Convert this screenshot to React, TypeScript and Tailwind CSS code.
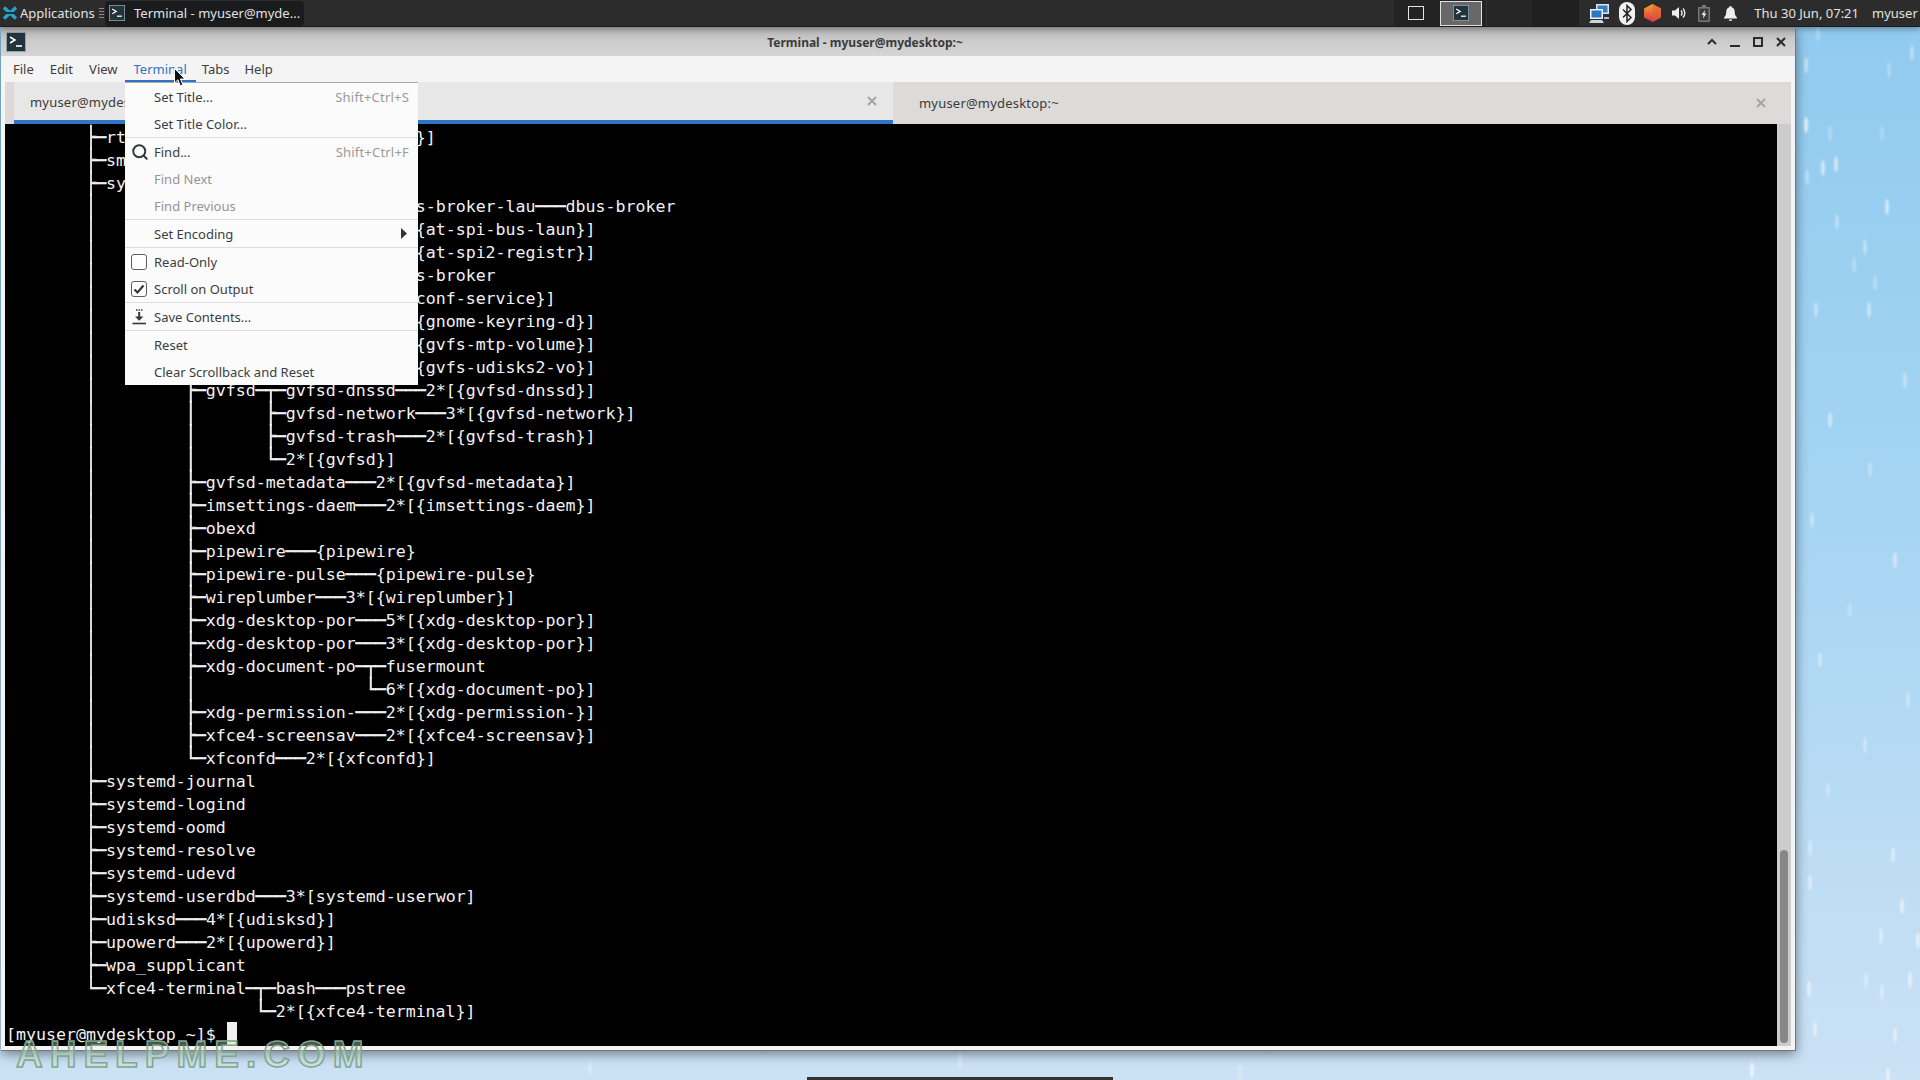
import { Search } from "lucide-react";

const L2 = "        │         ";
const L3 = L2 + "│       ";
const L4 = L2 + "│                 ";

const rows = [
  "        ├─rtkit-daemon───2*[{rtkit-daemon}]",
  "        ├─smartd",
  "        ├─systemd─┬─(sd-pam)",
  L2 + "├─at-spi-bus-laun─┬─dbus-broker-lau───dbus-broker",
  L4 + "└─3*[{at-spi-bus-laun}]",
  L2 + "├─at-spi2-registr───2*[{at-spi2-registr}]",
  L2 + "├─dbus-broker-lau───dbus-broker",
  L2 + "├─dconf-service───2*[{dconf-service}]",
  L2 + "├─gnome-keyring-d───3*[{gnome-keyring-d}]",
  L2 + "├─gvfs-mtp-volume───2*[{gvfs-mtp-volume}]",
  L2 + "├─gvfs-udisks2-vo───2*[{gvfs-udisks2-vo}]",
  L2 + "├─gvfsd─┬─gvfsd-dnssd───2*[{gvfsd-dnssd}]",
  L3 + "├─gvfsd-network───3*[{gvfsd-network}]",
  L3 + "├─gvfsd-trash───2*[{gvfsd-trash}]",
  L3 + "└─2*[{gvfsd}]",
  L2 + "├─gvfsd-metadata───2*[{gvfsd-metadata}]",
  L2 + "├─imsettings-daem───2*[{imsettings-daem}]",
  L2 + "├─obexd",
  L2 + "├─pipewire───{pipewire}",
  L2 + "├─pipewire-pulse───{pipewire-pulse}",
  L2 + "├─wireplumber───3*[{wireplumber}]",
  L2 + "├─xdg-desktop-por───5*[{xdg-desktop-por}]",
  L2 + "├─xdg-desktop-por───3*[{xdg-desktop-por}]",
  L2 + "├─xdg-document-po─┬─fusermount",
  L4 + "└─6*[{xdg-document-po}]",
  L2 + "├─xdg-permission-───2*[{xdg-permission-}]",
  L2 + "├─xfce4-screensav───2*[{xfce4-screensav}]",
  L2 + "└─xfconfd───2*[{xfconfd}]",
  "        ├─systemd-journal",
  "        ├─systemd-logind",
  "        ├─systemd-oomd",
  "        ├─systemd-resolve",
  "        ├─systemd-udevd",
  "        ├─systemd-userdbd───3*[systemd-userwor]",
  "        ├─udisksd───4*[{udisksd}]",
  "        ├─upowerd───2*[{upowerd}]",
  "        ├─wpa_supplicant",
  "        └─xfce4-terminal─┬─bash───pstree",
  "                         └─2*[{xfce4-terminal}]",
];

// raindrops on the wallpaper: x, y, opacity
const drops = [
  [1806, 65, 0.5], [1806, 125, 0.8], [1823, 168, 0.6], [1836, 164, 0.6], [1807, 177, 0.4],
  [1887, 207, 0.6], [1837, 222, 0.4], [1865, 247, 0.4], [1854, 265, 0.3], [1875, 283, 0.3],
  [1869, 310, 0.5], [1816, 310, 0.4], [1912, 53, 0.4], [1818, 33, 0.3], [1889, 70, 0.3],
  [1830, 133, 0.3], [1882, 133, 0.25], [1905, 380, 0.4], [1830, 420, 0.5], [1870, 470, 0.35],
  [1812, 520, 0.4], [1895, 560, 0.5], [1850, 610, 0.3], [1820, 660, 0.45], [1908, 700, 0.35],
  [1865, 745, 0.4], [1828, 790, 0.3], [1893, 855, 0.5], [1810, 848, 0.4], [1810, 883, 0.5],
  [1902, 906, 0.6], [1881, 936, 0.5], [1918, 940, 0.6], [1910, 980, 0.6], [1866, 980, 0.4],
  [1809, 989, 0.6], [1882, 992, 0.4], [1815, 1029, 0.5], [1895, 1035, 0.5], [1752, 1070, 0.7],
  [1888, 1075, 0.6], [590, 1068, 0.3], [960, 1060, 0.4], [1240, 1072, 0.3],
];

function Row({ text }: { text: string }) {
  const parts = text.split(/([─│├└┬])/);
  return (
    <div className="h-[23px] leading-[23px] whitespace-pre">
      {parts.map((part, i) =>
        i % 2 === 1 ? (
          <span
            key={i}
            className="inline-block w-[10px] scale-y-[1.22] [-webkit-text-stroke:0.6px_#f2f2f2]"
          >
            {part}
          </span>
        ) : (
          <span key={i}>{part}</span>
        ),
      )}
    </div>
  );
}

function TerminalIcon({ className }: { className: string }) {
  return (
    <svg viewBox="0 0 20 20" className={className}>
      <rect x="0.5" y="0.5" width="19" height="19" fill="#22343e" stroke="#94a3a8" />
      <path d="M4 5l5 3-5 3" fill="none" stroke="#fff" strokeWidth="1.5" />
      <path d="M10 14h6" stroke="#fff" strokeWidth="1.6" />
    </svg>
  );
}

function MenuItem({
  label,
  shortcut,
  disabled,
  icon,
  arrow,
}: {
  label: string;
  shortcut?: string;
  disabled?: boolean;
  icon?: React.ReactNode;
  arrow?: boolean;
}) {
  return (
    <div className="h-[27px] flex items-center pl-[6px] pr-[9px]">
      <div className="w-[23px] flex-shrink-0 flex items-center">{icon}</div>
      <span className={`pt-[2px] ${disabled ? "text-[#949494]" : "text-[#3a3e42]"}`}>{label}</span>
      {shortcut && <span className="ml-auto pt-[2px] tracking-[0.2px] text-[#9a9a9a]">{shortcut}</span>}
      {arrow && (
        <svg viewBox="0 0 6 11" className="ml-auto mr-[2px] w-[6px] h-[11px]">
          <path d="M0 0l6 5.5L0 11z" fill="#2e3436" />
        </svg>
      )}
    </div>
  );
}

function Checkbox({ checked }: { checked?: boolean }) {
  return (
    <div className="w-[16px] h-[16px] rounded-[3px] border border-[#5c6064] bg-white flex items-center justify-center">
      {checked && (
        <svg viewBox="0 0 12 12" className="w-[12px] h-[12px]">
          <path d="M1.5 6.5l3 3 6-7" fill="none" stroke="#33383c" strokeWidth="2.2" />
        </svg>
      )}
    </div>
  );
}

function Sep() {
  return <div className="h-px bg-[#dddddd]" />;
}

function CloseX() {
  return (
    <svg viewBox="0 0 10 10" className="w-[10px] h-[10px]">
      <path d="M1 1l8 8M9 1l-8 8" stroke="#a3a3a3" strokeWidth="1.8" />
    </svg>
  );
}

function TopPanel() {
  return (
    <div className="h-[27px] flex-shrink-0 flex items-center bg-[#2c2c2c] border-b border-[#1b1b1b] text-[13px] text-[#e2e2e2] shadow-[0_2px_6px_rgba(0,0,0,0.35)] z-10">
      {/* Applications menu */}
      <svg viewBox="0 0 16 16" className="ml-[2px] w-[16px] h-[16px]">
        <path d="M2 2.5l12 11M14 2.5l-12 11" stroke="#2aa3c9" strokeWidth="3.4" />
        <path d="M4 8h8" stroke="#12323f" strokeWidth="2" />
      </svg>
      <span className="ml-[2px] w-[79px] pt-[2px]">Applications</span>
      <div className="w-[5px] flex flex-col gap-[2px]">
        <div className="h-px bg-[#8a8a8a]" />
        <div className="h-px bg-[#8a8a8a]" />
        <div className="h-px bg-[#8a8a8a]" />
        <div className="h-px bg-[#8a8a8a]" />
      </div>
      {/* Window button */}
      <div className="ml-[1px] w-[199px] h-[25px] rounded-[4px] bg-[#191b1d] flex items-center pl-[4px]">
        <TerminalIcon className="w-[16px] h-[16px]" />
        <span className="ml-[9px] pt-[2px] whitespace-nowrap">Terminal - myuser@myde...</span>
      </div>

      <div className="ml-auto flex items-center h-full">
        {/* Workspace switcher */}
        <div className="w-[92px] h-full bg-[#232323] flex items-center pl-[14px]">
          <div className="w-[16px] h-[14px] border border-[#e6e6e6]" />
          <div className="ml-[16px] w-[42px] h-[25px] bg-[#686868] border border-[#e0e0e0] flex items-center justify-center">
            <TerminalIcon className="w-[16px] h-[16px]" />
          </div>
        </div>
        <div className="w-[46px] h-full bg-[#262626] border-l border-[#333333]" />
        <div className="w-[47px] h-full bg-[#202020]" />

        {/* Tray */}
        <svg viewBox="0 0 21 21" className="ml-[10px] w-[21px] h-[21px]">
          <rect x="7" y="1" width="13" height="10" fill="#dfe4ea" />
          <rect x="8.5" y="2.5" width="10" height="7" fill="#2f7fc9" />
          <rect x="1" y="6" width="13" height="10" fill="#eef1f4" />
          <rect x="2.5" y="7.5" width="10" height="7" fill="#2a76c4" />
          <path d="M0 20l2-3h11l2 3z" fill="#d0d3d6" />
          <path d="M15 14h5v2h-5z" fill="#b8bcc0" />
        </svg>
        <svg viewBox="0 0 16 23" className="ml-[9px] w-[16px] h-[23px]">
          <rect width="16" height="23" rx="8" fill="#f2f2f2" />
          <path d="M4 7.5l8 8-4 4v-16l4 4-8 8" fill="none" stroke="#222" strokeWidth="1.5" />
        </svg>
        <svg viewBox="0 0 17 18" className="ml-[9px] w-[17px] h-[18px]">
          <defs>
            <linearGradient id="cube" x1="0" y1="0" x2="0" y2="1">
              <stop offset="0" stopColor="#f7a52c" />
              <stop offset="1" stopColor="#d4304f" />
            </linearGradient>
          </defs>
          <path d="M8.5 0L17 4.5v9L8.5 18 0 13.5v-9z" fill="url(#cube)" />
          <path d="M8.5 0v18L17 13.5v-9z" fill="#e0602f" opacity="0.6" />
        </svg>
        <svg viewBox="0 0 14 14" className="ml-[11px] w-[14px] h-[14px]">
          <path d="M0 4.5h3L7 1v12L3 9.5H0z" fill="#eeeeee" />
          <path d="M9 4.5a3.5 3.5 0 010 5M11 2.5a6.5 6.5 0 010 9" fill="none" stroke="#eeeeee" strokeWidth="1.4" />
        </svg>
        <svg viewBox="0 0 12 17" className="ml-[12px] w-[12px] h-[17px]">
          <path d="M4 0h4v2h3a1 1 0 011 1v13a1 1 0 01-1 1H1a1 1 0 01-1-1V3a1 1 0 011-1h3z" fill="#777777" />
          <rect x="1.5" y="3.5" width="9" height="12" fill="#3a3a3a" />
          <path d="M7 5L3.5 10h2L5 13.5 8.5 8.5h-2z" fill="#e6e6e6" />
        </svg>
        <svg viewBox="0 0 13 15" className="ml-[14px] w-[13px] h-[15px]">
          <path d="M6.5 0a1.2 1.2 0 011.2 1.2C10 2 10.8 4 10.8 6.5c0 2.5 1 3.8 2.2 5V12.5H0v-1c1.2-1.2 2.2-2.5 2.2-5C2.2 4 3 2 5.3 1.2A1.2 1.2 0 016.5 0z" fill="#eeeeee" />
          <path d="M4.8 13.5h3.4a1.7 1.5 0 01-3.4 0z" fill="#eeeeee" />
        </svg>
        <span className="ml-[17px] pt-[2px] whitespace-nowrap">Thu 30 Jun, 07:21</span>
        <span className="ml-[13px] pt-[2px] w-[48px] whitespace-nowrap overflow-hidden">myuser</span>
      </div>
    </div>
  );
}

export default function App() {
  return (
    <div className="relative h-screen w-screen overflow-hidden flex flex-col [font-family:'Noto_Sans',sans-serif] bg-gradient-to-b from-[#8fcaee] via-[#a7d5f3] to-[#cbe1f4]">
      {/* Wallpaper rain */}
      <svg className="absolute inset-0 w-full h-full blur-[1px]" viewBox="0 0 1920 1080">
        {drops.map(([x, y, o], i) => (
          <ellipse key={i} cx={x} cy={y} rx="1.8" ry="8" fill="#ffffff" opacity={o} />
        ))}
      </svg>

      <TopPanel />

      {/* Terminal window */}
      <div className="relative ml-px w-[1795px] h-[1024px] flex flex-col rounded-tr-[4px] border-r border-b border-[#777777] bg-[#f4f4f4] shadow-[0_3px_12px_rgba(0,0,0,0.45)] text-[13px]">
        {/* Title bar */}
        <div className="h-[29px] flex-shrink-0 flex items-center bg-gradient-to-b from-[#b4b4b4] via-[#cccccc] to-[#d6d5d4] pl-[5px] pr-[9px] relative">
          <TerminalIcon className="w-[20px] h-[20px]" />
          <span className="ml-[729px] pt-[2px] w-[220px] text-center text-[12px] font-bold text-[#3b3b3b] whitespace-nowrap">
            Terminal - myuser@mydesktop:~
          </span>
          <div className="ml-auto pt-[1px] flex items-center gap-[13px]">
            <svg viewBox="0 0 10 10" className="w-[10px] h-[10px]">
              <path d="M1 7l4-4 4 4" fill="none" stroke="#2b2b2b" strokeWidth="2" />
            </svg>
            <svg viewBox="0 0 10 10" className="w-[10px] h-[10px]">
              <path d="M0 9h10" stroke="#2b2b2b" strokeWidth="2" />
            </svg>
            <svg viewBox="0 0 10 10" className="w-[10px] h-[10px]">
              <rect x="1" y="1" width="8" height="8" fill="none" stroke="#2b2b2b" strokeWidth="2" />
            </svg>
            <svg viewBox="0 0 10 10" className="w-[10px] h-[10px]">
              <path d="M1 1l8 8M9 1l-8 8" stroke="#2b2b2b" strokeWidth="2" />
            </svg>
          </div>
        </div>

        {/* Menu bar */}
        <div className="h-[26px] flex-shrink-0 flex pl-[3px] text-[#3a3e42]">
          <div className="px-[9px] pr-[8px] leading-[27px]">File</div>
          <div className="px-[8px] leading-[27px]">Edit</div>
          <div className="pl-[8px] pr-[7px] leading-[27px]">View</div>
          <div className="px-[9px] leading-[27px] text-[#3272c4] border-b-[2px] border-[#3272c4]">Terminal</div>
          <div className="pl-[6px] pr-[7px] leading-[27px]">Tabs</div>
          <div className="px-[8px] leading-[27px]">Help</div>
        </div>

        {/* Notebook */}
        <div className="flex-1 min-h-0 flex flex-col px-[4px] pb-[4px]">
          <div className="h-[42px] flex-shrink-0 flex bg-[#dcdbd9] text-[#3a3a3a] tracking-[0.2px]">
            <div className="ml-[9px] w-[879px] flex items-center justify-between pl-[16px] pr-[16px] bg-[#e8e7e7] border-b-[4px] border-[#2f74c8]">
              <span className="pt-[4px]">myuser@mydesktop:~</span>
              <CloseX />
            </div>
            <div className="flex-1 flex items-center justify-between pl-[26px] pr-[25px]">
              <span className="pt-[2px]">myuser@mydesktop:~</span>
              <CloseX />
            </div>
          </div>

          <div className="flex-1 min-h-0 flex">
            <div className="flex-1 min-w-0 bg-black pl-px pt-[2px] text-[#f2f2f2] text-[16.6px] [font-family:'DejaVu_Sans_Mono',monospace] overflow-hidden">
              {rows.map((row, i) => (
                <Row key={i} text={row} />
              ))}
              <div className="h-[23px] leading-[23px] whitespace-pre flex">
                <span>[myuser@mydesktop ~]$ </span>
                <span className="ml-[1px] -mt-px w-[10px] h-[23px] bg-[#f0f0f0]" />
              </div>
            </div>
            {/* Scrollbar */}
            <div className="w-[14px] flex-shrink-0 bg-[#cccccc] flex flex-col justify-end px-[3px] pb-[3px]">
              <div className="h-[193px] rounded-full bg-[#878787]" />
            </div>
          </div>
        </div>

        {/* Terminal menu */}
        <div className="absolute left-[124px] top-[55px] w-[293px] bg-[#fbfbfc] border-t border-[#aaaaaa] z-10">
          <MenuItem label="Set Title..." shortcut="Shift+Ctrl+S" />
          <MenuItem label="Set Title Color..." />
          <Sep />
          <MenuItem
            label="Find..."
            shortcut="Shift+Ctrl+F"
            icon={<Search className="w-[18px] h-[18px] text-[#33383c]" strokeWidth={2.6} />}
          />
          <MenuItem label="Find Next" disabled />
          <MenuItem label="Find Previous" disabled />
          <Sep />
          <MenuItem label="Set Encoding" arrow />
          <Sep />
          <MenuItem label="Read-Only" icon={<Checkbox />} />
          <MenuItem label="Scroll on Output" icon={<Checkbox checked />} />
          <Sep />
          <MenuItem
            label="Save Contents..."
            icon={
              <svg viewBox="0 0 16 16" className="w-[16px] h-[16px]">
                <path d="M5 1h1.5M7.5 1H9M10 1h1.5" stroke="#33383c" strokeWidth="1.6" />
                <path d="M8.2 3v7" stroke="#33383c" strokeWidth="2" />
                <path d="M4 7.5h8.4l-4.2 4.3z" fill="#33383c" />
                <path d="M1.5 14.5h13.5" stroke="#33383c" strokeWidth="1.6" />
              </svg>
            }
          />
          <Sep />
          <MenuItem label="Reset" />
          <MenuItem label="Clear Scrollback and Reset" />
        </div>
      </div>

      {/* Autohidden dock sliver */}
      <div className="mt-auto mx-auto w-[306px] h-[3px] bg-[#333333]" />

      {/* Mouse pointer */}
      <svg viewBox="0 0 12 19" className="absolute left-[174px] top-[68px] w-[12px] h-[19px] z-20">
        <path d="M0.5 0.5v14.5l3.4-3.2 2.4 6 2.6-1-2.5-5.8h4.6z" fill="#111111" stroke="#ffffff" strokeWidth="1" />
      </svg>

      {/* Site watermark */}
      <div className="absolute left-[16px] top-[1033px] text-[37px] leading-[44px] font-bold tracking-[7px] text-[#cfe3d0]/40 [-webkit-text-stroke:1.5px_#7ea78b] [font-family:'Liberation_Sans',sans-serif] z-20">
        AHELPME.COM
      </div>
    </div>
  );
}
